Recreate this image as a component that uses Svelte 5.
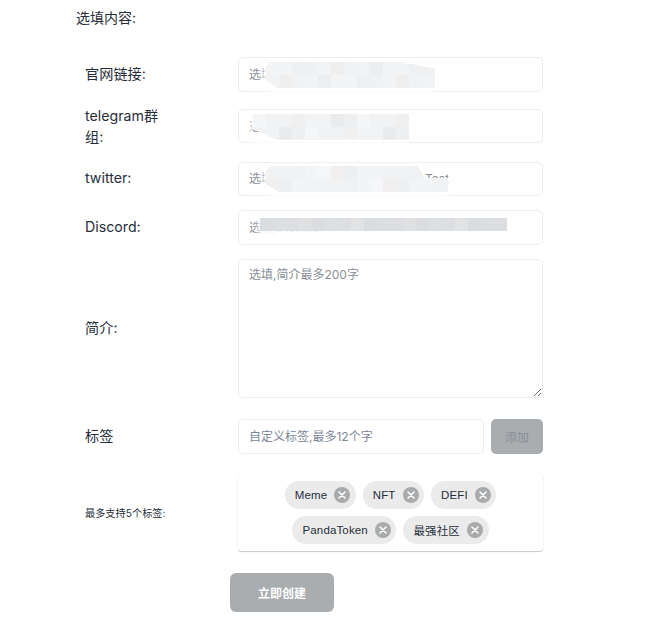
<script lang="ts">
  // Pixelated patches that hide the values typed in the link inputs.
  const CELL = 13;
  const patches = {
    site: { left: 28, top: 5, cols: 13, rows: 2, colors: ['#f0efef', '#f2f3f5', '#f3f4f6', '#eff0f2', '#f1f3f5', '#f0f2f4', '#edeef0', '#f2f4f5', '#eff1f3'] },
    telegram: { left: 15, top: 5, cols: 12, rows: 2, colors: ['#e9ebed', '#f1f0f0', '#f4f5f6', '#f1f3f5', '#f0f2f4', '#edeff1', '#f2f3f5', '#f0f2f4'] },
    twitter: { left: 28, top: 4.5, cols: 14, rows: 2, colors: ['#f1efef', '#f3f4f6', '#f0f2f4', '#eff1f3', '#f5f6f7', '#edeff1', '#f2f3f5', '#f0f2f4', '#f3f4f5'] },
    discord: { left: 22, top: 8, cols: 19, rows: 1, colors: ['#dcdee1', '#dfe1e3', '#dadde0', '#dde0e3', '#dcdee1', '#e0e2e4', '#dbdde0', '#dbdee2'] },
  };

  function cells(p) {
    const out = [];
    for (let i = 0; i < p.cols * p.rows; i++) out.push(p.colors[(i * 5 + 2) % p.colors.length]);
    return out;
  }

  const links = [
    { key: 'site', label: '官网链接:', placeholder: '选填,官网链接', gap: 13.5 },
    { key: 'telegram', label: 'telegram群组:', placeholder: '选填,telegram群组', gap: 14.5 },
    { key: 'twitter', label: 'twitter:', placeholder: '选填,twitter', gap: 14 },
    { key: 'discord', label: 'Discord:', placeholder: '选填,Discord', gap: 14.5 },
  ];

  let tags = $state(['Meme', 'NFT', 'DEFI', 'PandaToken', '最强社区']);
</script>

<div class="page">
  <div class="title">选填内容:</div>

  <form class="form" onsubmit={(e) => e.preventDefault()}>
    {#each links as link (link.key)}
      {@const p = patches[link.key]}
      <div class="row" style="margin-bottom: {link.gap}px">
        <div class="label" class:two={link.key === 'telegram'}>{link.label}</div>
        <div class="field">
          <input placeholder={link.placeholder} />
          {#if link.key === 'twitter'}<span class="tail">Test</span>{/if}
          <div class="mosaic {link.key}" style="left: {p.left}px; top: {p.top}px; width: {p.cols * CELL}px; height: {p.rows * CELL}px">
            <div class="cells" style="grid-template-columns: repeat({p.cols}, 1fr)">
              {#each cells(p) as c, i (i)}
                <span style="background: {c}"></span>
              {/each}
            </div>
          </div>
        </div>
      </div>
    {/each}

    <div class="row about">
      <div class="label">简介:</div>
      <div class="field">
        <textarea placeholder="选填,简介最多200字"></textarea>
      </div>
    </div>

    <div class="row add">
      <div class="label">标签</div>
      <div class="field addfield">
        <input placeholder="自定义标签,最多12个字" />
        <button type="button" class="addbtn">添加</button>
      </div>
    </div>

    <div class="row taglist">
      <div class="label small">最多支持5个标签:</div>
      <div class="tags">
        {#each tags as t (t)}
          <span class="chip">
            {t}
            <button type="button" class="close" aria-label="删除" onclick={() => (tags = tags.filter((x) => x !== t))}>
              <svg viewBox="0 0 16 16" width="16" height="16">
                <circle cx="8" cy="8" r="8" fill="#a8aaac" />
                <path d="M5 5l6 6M11 5l-6 6" stroke="#fff" stroke-width="1.6" stroke-linecap="round" />
              </svg>
            </button>
          </span>
        {/each}
      </div>
    </div>

    <button type="submit" class="submit">立即创建</button>
  </form>
</div>

<style>
  :global(body) {
    margin: 0;
    background: #fff;
    color: #262e3a;
    font-family: Inter, "Noto Sans CJK SC", sans-serif;
  }
  .page {
    width: 650px;
    height: 621px;
    padding: 9px 0 0 76px;
    box-sizing: border-box;
    overflow: hidden;
  }
  .title {
    font-size: 14px;
    line-height: 18px;
    height: 48px;
  }
  .form {
    padding-left: 9px;
  }
  .row {
    display: flex;
    align-items: center;
  }
  .label {
    width: 80px;
    margin-right: 73px;
    margin-bottom: 2px;
    font-size: 14.2px;
    line-height: 21px;
    flex: none;
  }
  .label.two {
    margin-bottom: 0;
  }
  .label.small {
    font-size: 10.2px;
    width: 120px;
    margin-right: 33px;
    margin-bottom: 0;
    margin-top: 2px;
  }
  .field {
    position: relative;
    width: 305px;
  }
  input, textarea {
    display: block;
    width: 100%;
    box-sizing: border-box;
    border: 1px solid #e8eef0;
    border-radius: 5px;
    background: #fff;
    font: 12px Inter, "Noto Sans CJK SC", sans-serif;
    color: #262e3a;
    outline: none;
  }
  input {
    height: 34.5px;
    padding: 0 10px;
  }
  textarea {
    height: 139px;
    padding: 7px 10px;
    line-height: 16px;
  }
  ::placeholder {
    color: #8a8f96;
    opacity: 1;
  }
  .tail {
    position: absolute;
    left: 187px;
    top: 9px;
    font-size: 12px;
    line-height: 16px;
    color: #8a8f96;
  }
  .mosaic {
    position: absolute;
    border-radius: 8px;
    box-shadow: 0 3px 6px 3px rgba(255, 255, 255, 0.9);
  }
  .cells {
    display: grid;
    grid-auto-rows: 1fr;
    width: 100%;
    height: 100%;
    clip-path: polygon(3% 0, 100% 0, 100% 100%, 5% 100%, 0 70%, 0 15%);
  }
  .mosaic.site .cells {
    clip-path: polygon(3% 0, 80% 0, 100% 25%, 100% 100%, 7% 100%, 0 70%, 0 15%);
  }
  .mosaic.telegram .cells {
    clip-path: polygon(3% 0, 100% 0, 100% 100%, 15% 100%, 0 60%, 0 0);
  }
  .mosaic.twitter .cells {
    clip-path: polygon(3% 0, 83% 0, 88% 46%, 100% 46%, 100% 100%, 7% 100%, 0 70%, 0 15%);
  }
  .mosaic.discord .cells {
    clip-path: none;
  }
  .about {
    margin-bottom: 21px;
  }
  .add {
    margin-bottom: 20.5px;
  }
  .addfield {
    display: flex;
    gap: 7px;
  }
  .addfield input {
    flex: 1;
    min-width: 0;
  }
  .addfield ::placeholder {
    color: #7b8794;
  }
  .addbtn {
    width: 52px;
    height: 34.5px;
    flex: none;
    border: none;
    border-radius: 5px;
    background: #a9adaf;
    color: #8a8f9a;
    font: 12px Inter, "Noto Sans CJK SC", sans-serif;
  }
  .tags {
    width: 305px;
    box-sizing: border-box;
    padding: 7px 8px;
    display: flex;
    flex-wrap: wrap;
    justify-content: center;
    gap: 7px;
    border-radius: 3px;
    box-shadow: 0 1px 1px #c6c9ce, 0 0 2px #eef0f2;
  }
  .chip {
    display: inline-flex;
    align-items: center;
    gap: 7px;
    height: 28px;
    padding: 0 5.5px 0 10px;
    border-radius: 14px;
    background: #ebebeb;
    font: 11.5px "Liberation Sans", "Noto Sans CJK SC", sans-serif;
    letter-spacing: 0.15px;
  }
  .close {
    display: flex;
    padding: 0;
    border: none;
    background: none;
  }
  .taglist {
    margin-bottom: 22px;
  }
  .submit {
    display: block;
    width: 104px;
    height: 39px;
    margin-left: 145px;
    border: none;
    border-radius: 6px;
    background: #a9adaf;
    color: #fff;
    font: bold 12px Inter, "Noto Sans CJK SC", sans-serif;
  }
</style>
